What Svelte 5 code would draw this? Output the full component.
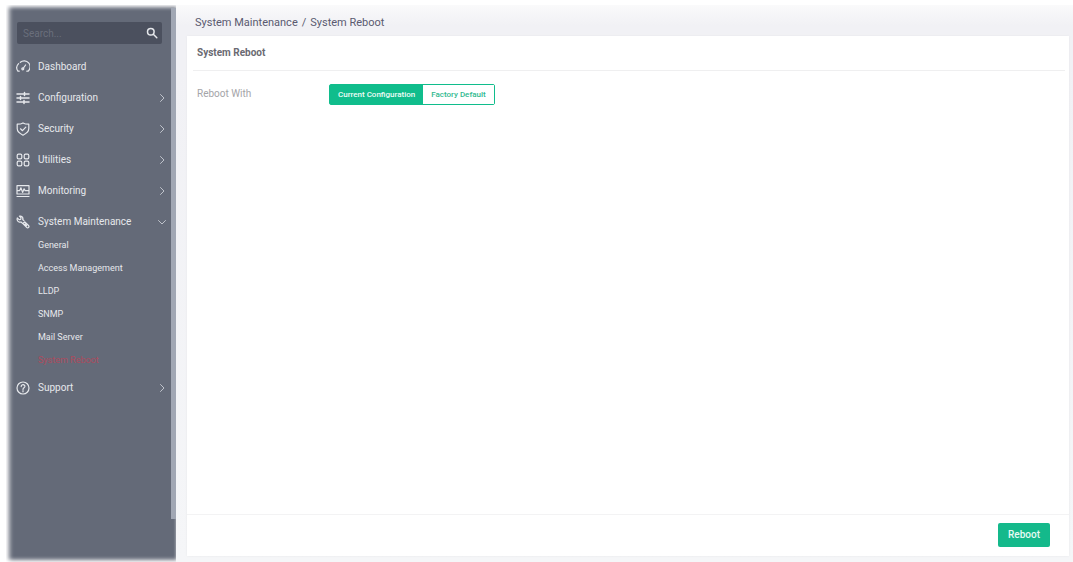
<script>
  const menu = [
    { label: 'Dashboard', icon: 'gauge' },
    { label: 'Configuration', icon: 'sliders', more: true },
    { label: 'Security', icon: 'shield', more: true },
    { label: 'Utilities', icon: 'grid', more: true },
    { label: 'Monitoring', icon: 'monitor', more: true },
    {
      label: 'System Maintenance', icon: 'wrench', more: true, open: true,
      children: ['General', 'Access Management', 'LLDP', 'SNMP', 'Mail Server', 'System Reboot']
    },
    { label: 'Support', icon: 'help', more: true }
  ];
  const modes = ['Current Configuration', 'Factory Default'];
  let mode = $state(modes[0]);
  let query = $state('');
</script>

{#snippet icon(name)}
  <svg class="icon" viewBox="0 0 14 14" aria-hidden="true">
    {#if name === 'gauge'}
      <path d="M3.200 11.200H1.900A5.900 5.900 0 0 1 2.600 3.600M4.300 2.300A5.900 5.900 0 0 1 12.100 11.200H10.800M7 8.600 9.600 5" />
      <circle cx="6.800" cy="8.800" r="1" />
    {:else if name === 'sliders'}
      <path d="M1 3h12M1 7h12M1 11h12M8.500 1.600v2.800M4.500 5.600v2.800M8 9.600v2.800" stroke-width="1.500" />
    {:else if name === 'shield'}
      <path d="M7 .9C5.300 2 3.500 2.200 1.200 2.200v4.400c0 3 2.800 5.200 5.800 6.600 3-1.400 5.800-3.600 5.800-6.600V2.200C10.500 2.200 8.700 2 7 .9ZM4.500 6.800l2 1.900 3.300-3.600" />
    {:else if name === 'grid'}
      <rect x="1.200" y="1.200" width="4.600" height="4.600" rx="1.300" />
      <rect x="8.200" y="1.200" width="4.600" height="4.600" rx="1.300" />
      <rect x="1.200" y="8.200" width="4.600" height="4.600" rx="1.300" />
      <rect x="8.200" y="8.200" width="4.600" height="4.600" rx="1.300" />
    {:else if name === 'monitor'}
      <path d="M1 1.700h12v8.300H1zM1 12.500h12M1.500 6.600h2.200l1.200-2.800 1.700 4.600 1.500-3.600 1 1.800h3.400" />
    {:else if name === 'wrench'}
      <path d="M3.400 1.200 5 2.800 4.700 4.300 3.100 4.600 1.300 3C.7 4.600 1.400 6.400 3 7c.8.300 1.500.2 2.100 0l1.400 1.400M7.900 5.600 6.800 4.800C7.200 3.200 6.400 1.600 4.900 1.100 4.400.9 3.900 1 3.400 1.200" />
      <path d="m8.600 6.800 3.900 3.700c.6.600.6 1.300.1 1.900s-1.400.6-2 0L6.900 8.500ZM9 9l1.500 1.500" />
    {:else}
      <circle cx="7" cy="7" r="6" />
      <path d="M5.200 5.600c0-2.600 3.900-2.400 3.700-.1C8.800 6.800 7 6.800 7 8.400M7 9.700v1.100" />
    {/if}
  </svg>
{/snippet}

<div class="shell">
  <aside>
    <form class="search" role="search" onsubmit={(e) => e.preventDefault()}>
      <input type="text" aria-label="Search" placeholder="Search..." bind:value={query} />
      <button type="submit" aria-label="Search">
        <svg viewBox="0 0 12 12" aria-hidden="true"><circle cx="4.800" cy="4.800" r="3.300" /><path d="m7.300 7.300 3.500 3.500" /></svg>
      </button>
    </form>
    <nav aria-label="Main">
      <ul>
        {#each menu as item}
          <li>
            <a class="entry" href={'#' + item.icon}>
              {@render icon(item.icon)}
              <span>{item.label}</span>
              {#if item.more}
                <svg class="chevron" class:open={item.open} viewBox="0 0 8 8" aria-hidden="true"><path d="m2.500.5 3.500 3.500-3.500 3.500" /></svg>
              {/if}
            </a>
            {#if item.children}
              <ul class="children">
                {#each item.children as child}
                  <li><a class="child" class:current={child === 'System Reboot'} href={'#' + child.replaceAll(' ', '-')}>{child}</a></li>
                {/each}
              </ul>
            {/if}
          </li>
        {/each}
      </ul>
    </nav>
    <div class="thumb"></div>
  </aside>

  <main>
    <div class="crumbs"><a href="#wrench">System Maintenance</a><span>/</span><span>System Reboot</span></div>
    <section>
      <h1>System Reboot</h1>
      <div class="field">
        <span id="mode-label">Reboot With</span>
        <div class="modes" role="group" aria-labelledby="mode-label">
          {#each modes as m}
            <button type="button" class:active={mode === m} aria-pressed={mode === m} onclick={() => (mode = m)}>{m}</button>
          {/each}
        </div>
      </div>
      <footer><button type="button" class="reboot">Reboot</button></footer>
    </section>
  </main>
</div>

<style>
  :global(body) { margin: 0; background: #fff; }
  .shell {
    box-sizing: border-box;
    min-height: 100vh;
    padding: 5px 0 0 6px;
    display: flex;
    font-family: Roboto, "Liberation Sans", sans-serif;
    font-size: 10px;
  }
  a { color: inherit; text-decoration: none; }
  ul { list-style: none; margin: 0; padding: 0; }
  button, input { font: inherit; }
  svg { fill: none; stroke: currentColor; stroke-linecap: round; stroke-linejoin: round; }
  aside {
    position: relative;
    flex: none;
    box-sizing: border-box;
    width: 170px;
    padding: 17px 8px 0 10px;
    background: #646a78;
    color: #e6e8ec;
    box-shadow: inset 5px 0 5px -2px #fff, inset 0 4px 4px -2px #fff, inset 0 -4px 4px -2px #fff;
  }
  .thumb {
    position: absolute;
    top: 3px;
    right: 0;
    bottom: 43px;
    width: 5px;
    background: #a1a7b4;
  }
  .search {
    display: flex;
    align-items: center;
    height: 22px;
    margin: 0 6px 7px 1px;
    border-radius: 2px;
    background: #4b505e;
  }
  .search input {
    flex: 1;
    min-width: 0;
    padding: 0 6px;
    border: 0;
    outline: 0;
    background: none;
    color: #e6e8ec;
  }
  .search input::placeholder { color: #6a6f7c; opacity: 1; }
  .search button {
    display: flex;
    padding: 0 4px;
    border: 0;
    background: none;
    color: #e6e8ec;
  }
  .search svg { width: 12px; height: 12px; stroke-width: 1.5; }
  .entry {
    display: flex;
    align-items: center;
    gap: 8px;
    height: 31px;
  }
  .entry span { flex: 1; }
  .icon { width: 14px; height: 14px; stroke-width: 1.2; }
  .chevron { width: 8px; height: 8px; margin-right: 2px; color: #bfc3cb; }
  .chevron.open { transform: rotate(90deg); }
  .children { margin-top: -3px; }
  .child {
    display: block;
    padding-left: 22px;
    font-size: 9px;
    line-height: 23px;
  }
  .child.current { color: #ad4a5e; }
  main {
    flex: 1;
    min-width: 0;
    display: flex;
    flex-direction: column;
    padding: 0 4px 6px 11px;
    background: linear-gradient(#fafafb, #f1f1f5 20px, #f1f1f5 60px, #f5f6f8);
  }
  .crumbs {
    display: flex;
    gap: 4px;
    padding: 0 8px;
    color: #5a5a70;
    font-size: 11px;
    line-height: 36px;
    height: 31px;
  }
  section {
    flex: 1;
    display: flex;
    flex-direction: column;
    background: #fff;
    box-shadow: 0 0 2px #e6e6ea;
  }
  h1 {
    margin: 0 4px 0 6px;
    padding: 0 4px;
    border-bottom: 1px solid #efeff0;
    color: #6a6a72;
    font-size: 10px;
    font-weight: 700;
    line-height: 34px;
  }
  .field {
    flex: 1;
    display: flex;
    align-items: flex-start;
    padding: 13px 10px;
    color: #a4a4a8;
    line-height: 20px;
  }
  .field > span { width: 132px; }
  .modes {
    display: flex;
    border: 1px solid #10bd8c;
    border-radius: 2px;
  }
  .modes button {
    padding: 0 8px;
    border: 0;
    background: #fff;
    color: #30b98f;
    font-size: 8px;
    font-weight: 500;
    line-height: 19px;
  }
  .modes button.active { background: #10bd8c; color: #effcf7; }
  footer {
    display: flex;
    justify-content: flex-end;
    padding: 8px 19px 9px;
    border-top: 1px solid #f3f3f4;
  }
  .reboot {
    padding: 0 10px;
    border: 0;
    border-radius: 2px;
    background: #14b98b;
    color: #e6fbf4;
    font-weight: 500;
    line-height: 24px;
  }
</style>
